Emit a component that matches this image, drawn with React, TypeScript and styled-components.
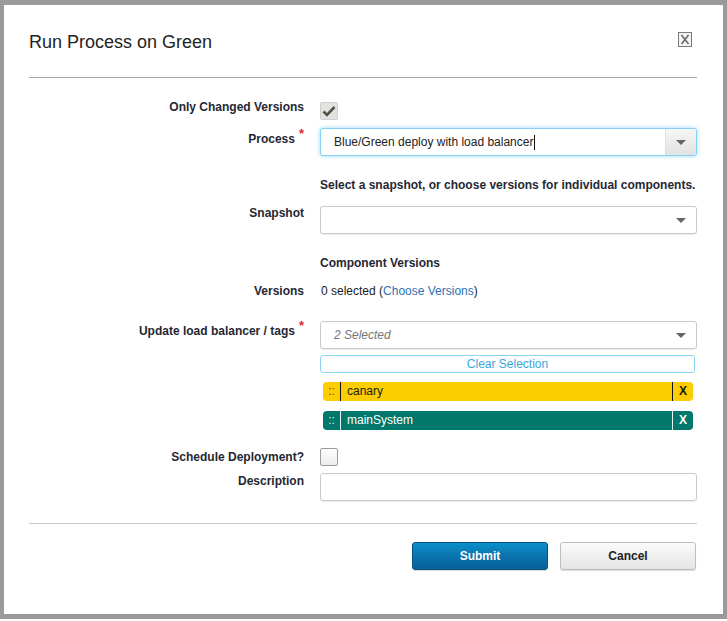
import React from "react";
import styled, { createGlobalStyle } from "styled-components";

const GlobalStyle = createGlobalStyle`
  html, body { margin: 0; padding: 0; background: #fff; }
  body { font-family: "Liberation Sans", Arial, sans-serif; font-size: 12px; color: #222; }
  * { box-sizing: border-box; }
`;

const Dialog = styled.div`
  width: 727px;
  height: 619px;
  border: 4px solid #9a9a9a;
  border-top-width: 5px;
  border-bottom-width: 5px;
  box-shadow: 1px 1px 1px #cfcfcf;
  background: #fff;
  padding: 0 26px 0 25px;
  display: flex;
  flex-direction: column;
`;

const Header = styled.div`
  height: 73px;
  padding-top: 26px;
  border-bottom: 1px solid #a8a8a8;
  display: flex;
  justify-content: space-between;
  align-items: flex-start;
`;

const Title = styled.h1`
  margin: 0;
  font-size: 18px;
  line-height: 22px;
  font-weight: normal;
  color: #222;
`;

const CloseButton = styled.button`
  margin: 1px 5px 0 0;
  padding: 0;
  border: none;
  background: none;
  width: 14px;
  height: 15px;
  display: flex;
`;

const Row = styled.div<{ $mt: number }>`
  display: flex;
  align-items: flex-start;
  gap: 16px;
  margin-top: ${(p) => p.$mt}px;
`;

const Label = styled.div<{ $pt?: number }>`
  width: 275px;
  flex: none;
  text-align: right;
  font-weight: bold;
  line-height: 15px;
  padding-top: ${(p) => p.$pt ?? 0}px;
  color: #1f2833;
`;

const Req = styled.span`
  color: #e0262e;
  font-weight: bold;
  font-size: 13px;
  position: relative;
  top: -5px;
  margin-left: 4px;
`;

const Field = styled.div`
  width: 377px;
  flex: none;
  display: flex;
  flex-direction: column;
`;

const CheckBox = styled.span<{ $checked?: boolean; $mt: number }>`
  display: flex;
  align-items: center;
  justify-content: center;
  width: 18px;
  height: 18px;
  margin-top: ${(p) => p.$mt}px;
  border-radius: 2px;
  border: 1px solid ${(p) => (p.$checked ? "#cfcfcf" : "#9c9c9c")};
  background: ${(p) =>
    p.$checked ? "#e2e2e2" : "linear-gradient(#ffffff, #ececec)"};
`;

const Select = styled.div<{ $focus?: boolean }>`
  height: 28px;
  display: flex;
  align-items: stretch;
  border: 1px solid ${(p) => (p.$focus ? "#86d0f2" : "#c9c9c9")};
  border-radius: 3px;
  box-shadow: ${(p) =>
    p.$focus ? "0 0 4px rgba(80, 190, 240, 0.6)" : "0 1px 1px rgba(0,0,0,0.08)"};
  background: #fff;
  overflow: hidden;
`;

const SelectValue = styled.div<{ $placeholder?: boolean }>`
  flex: 1;
  display: flex;
  align-items: center;
  padding-left: 13px;
  color: ${(p) => (p.$placeholder ? "#777" : "#222")};
  font-style: ${(p) => (p.$placeholder ? "italic" : "normal")};
`;

const Caret = styled.span`
  display: inline-block;
  width: 1px;
  height: 15px;
  background: #111;
  margin-left: 1px;
`;

const ArrowBox = styled.div<{ $shaded?: boolean }>`
  width: 31px;
  flex: none;
  display: flex;
  align-items: center;
  justify-content: center;
  background: ${(p) =>
    p.$shaded ? "linear-gradient(#f6f6f6, #e2e2e2)" : "transparent"};
  border-left: ${(p) => (p.$shaded ? "1px solid #e0e0e0" : "none")};
`;

const Arrow = styled.span`
  width: 0;
  height: 0;
  border-left: 5px solid transparent;
  border-right: 5px solid transparent;
  border-top: 5px solid #666;
`;

const Hint = styled.div<{ $mt: number; $bold?: boolean }>`
  margin-top: ${(p) => p.$mt}px;
  margin-left: 291px;
  white-space: nowrap;
  line-height: 15px;
  font-weight: ${(p) => (p.$bold ? "bold" : "normal")};
  color: #1f2833;
`;

const Value = styled.div`
  line-height: 15px;
  padding-left: 1px;
  color: #222;
`;

const Link = styled.a`
  color: #2e72b3;
  text-decoration: none;
`;

const ClearButton = styled.button`
  margin-top: 6px;
  height: 18px;
  width: 375px;
  border: 1px solid #8ad4f2;
  border-radius: 3px;
  background: #fff;
  color: #3aa6da;
  font-family: inherit;
  font-size: 12px;
  padding: 0;
`;

const Tag = styled.div<{ $bg: string; $fg: string; $line: string; $handle: string; $mt: number }>`
  margin-top: ${(p) => p.$mt}px;
  margin-left: 3px;
  width: 370px;
  height: 19px;
  border-radius: 4px;
  background: ${(p) => p.$bg};
  color: ${(p) => p.$fg};
  display: flex;
  align-items: stretch;
  line-height: 19px;

  & > .handle {
    width: 18px;
    flex: none;
    text-align: center;
    color: ${(p) => p.$handle};
    border-right: 1px solid ${(p) => p.$line};
    font-size: 12px;
  }
  & > .text {
    flex: 1;
    padding-left: 6px;
  }
  & > .remove {
    width: 21px;
    flex: none;
    text-align: center;
    font-weight: bold;
    border-left: 1px solid ${(p) => p.$line};
  }
`;

const Input = styled.div`
  height: 28px;
  border: 1px solid #c9c9c9;
  border-radius: 3px;
  box-shadow: 0 1px 1px rgba(0,0,0,0.08);
`;

const Divider = styled.div`
  margin-top: 22px;
  height: 1px;
  background: #c8c8c8;
`;

const Actions = styled.div`
  margin-top: 18px;
  display: flex;
  justify-content: flex-end;
  gap: 12px;
  padding-right: 1px;
`;

const Button = styled.button<{ $primary?: boolean }>`
  width: 136px;
  height: 28px;
  border-radius: 3px;
  font-family: inherit;
  font-size: 12px;
  font-weight: bold;
  padding: 0;
  color: ${(p) => (p.$primary ? "#fff" : "#222")};
  border: 1px solid ${(p) => (p.$primary ? "#05527f" : "#bdbdbd")};
  background: ${(p) =>
    p.$primary
      ? "linear-gradient(#0b8fcb, #0a6ea8 60%, #08609a)"
      : "linear-gradient(#fbfbfb, #e4e4e4)"};
  box-shadow: 0 1px 1px rgba(0,0,0,0.15);
`;

export default function App() {
  return (
    <>
      <GlobalStyle />
      <Dialog>
        <Header>
          <Title>Run Process on Green</Title>
          <CloseButton aria-label="Close">
            <svg width="14" height="15" viewBox="0 0 14 15">
              <rect x="0.5" y="0.5" width="13" height="14" fill="#f4f4f4" stroke="#7a7a7a" />
              <path d="M3.5 3 L10.5 12 M10.5 3 L3.5 12" stroke="#6a6a6a" strokeWidth="1.6" />
            </svg>
          </CloseButton>
        </Header>

        <Row $mt={21}>
          <Label $pt={1}>Only Changed Versions</Label>
          <CheckBox $checked $mt={3}>
            <svg width="14" height="12" viewBox="0 0 14 12">
              <path d="M1.5 6.5 L5 10 L12.5 2" fill="none" stroke="#4b5646" strokeWidth="2.6" />
            </svg>
          </CheckBox>
        </Row>

        <Row $mt={8}>
          <Label $pt={3}>
            Process<Req>*</Req>
          </Label>
          <Field>
            <Select $focus>
              <SelectValue>
                Blue/Green deploy with load balancer<Caret />
              </SelectValue>
              <ArrowBox $shaded>
                <Arrow />
              </ArrowBox>
            </Select>
          </Field>
        </Row>

        <Hint $mt={22} $bold>
          Select a snapshot, or choose versions for individual components.
        </Hint>

        <Row $mt={13}>
          <Label>Snapshot</Label>
          <Field>
            <Select>
              <SelectValue />
              <ArrowBox>
                <Arrow />
              </ArrowBox>
            </Select>
          </Field>
        </Row>

        <Hint $mt={22} $bold>
          Component Versions
        </Hint>

        <Row $mt={13}>
          <Label>Versions</Label>
          <Value>
            0 selected (<Link href="#">Choose Versions</Link>)
          </Value>
        </Row>

        <Row $mt={22}>
          <Label $pt={2}>
            Update load balancer / tags<Req>*</Req>
          </Label>
          <Field>
            <Select>
              <SelectValue $placeholder>2 Selected</SelectValue>
              <ArrowBox>
                <Arrow />
              </ArrowBox>
            </Select>
            <ClearButton>Clear Selection</ClearButton>
            <Tag $mt={9} $bg="#fccd00" $fg="#1a1a1a" $line="#111" $handle="#5a4e14">
              <span className="handle">::</span>
              <span className="text">canary</span>
              <span className="remove">X</span>
            </Tag>
            <Tag $mt={10} $bg="#00786c" $fg="#fff" $line="#e8f4f2" $handle="#d8eeeb">
              <span className="handle">::</span>
              <span className="text">mainSystem</span>
              <span className="remove">X</span>
            </Tag>
          </Field>
        </Row>

        <Row $mt={18}>
          <Label $pt={2}>Schedule Deployment?</Label>
          <CheckBox $mt={0} />
        </Row>

        <Row $mt={7}>
          <Label $pt={1}>Description</Label>
          <Field>
            <Input />
          </Field>
        </Row>

        <Divider />

        <Actions>
          <Button $primary>Submit</Button>
          <Button>Cancel</Button>
        </Actions>
      </Dialog>
    </>
  );
}
